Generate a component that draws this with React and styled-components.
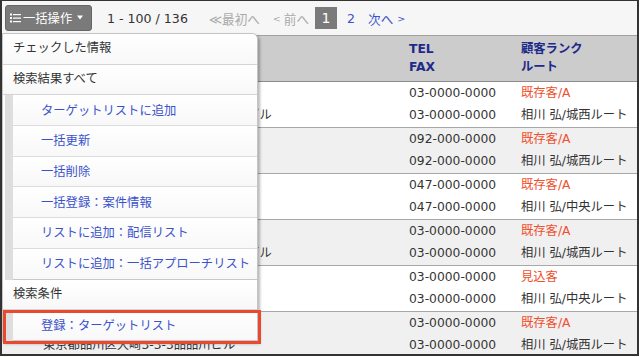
import React from 'react'
import styled, { createGlobalStyle } from 'styled-components'

const GlobalStyle = createGlobalStyle`
    html, body {
        margin: 0;
        padding: 0;
        background: #fff;
    }
    body {
        font-family: "DejaVu Sans", "Noto Sans CJK JP", sans-serif;
        font-size: 12.3px;
        color: #333;
    }
`

const Frame = styled.div`
    position: relative;
    width: 639px;
    height: 356px;
    box-sizing: border-box;
    border-style: solid;
    border-color: #333;
    border-width: 1px 2px 2px 2px;
    overflow: hidden;
    background: #fff;
`

const Toolbar = styled.div`
    height: 35px;
    box-sizing: border-box;
    display: flex;
    align-items: center;
    padding-left: 3px;
    background: #f6f6f6;
    border-bottom: 1px solid #a2a2a2;
`

const BulkButton = styled.div`
    width: 87px;
    height: 26px;
    box-sizing: border-box;
    display: flex;
    align-items: center;
    padding-left: 4px;
    background: #7a7a7a;
    border: 1px solid #666;
    border-radius: 3px;
    color: #fff;
    margin-top: -1px;
`

const ButtonLabel = styled.span`
    margin-left: 2px;
`

const Caret = styled.svg`
    margin-left: 5px;
`

const PagerText = styled.span`
    display: flex;
    align-items: center;
    margin-left: ${props => props.$ml}px;
    font-size: 12.6px;
    color: ${props => props.$color || '#333'};
    white-space: nowrap;
`

const Chevron = styled.span`
    font-size: 9.5px;
    margin: ${props => props.$right ? '0 0 0 4px' : '0 3px 0 0'};
`

const PageBox = styled.span`
    margin-left: ${props => props.$ml}px;
    width: 22px;
    height: 22px;
    display: flex;
    align-items: center;
    justify-content: center;
    background: #7a7a7a;
    color: #fff;
    font-size: 14px;
`

const HeaderRow = styled.div`
    height: 46px;
    box-sizing: border-box;
    display: grid;
    grid-template-columns: 366px 112px 1fr;
    align-items: center;
    padding-left: 41px;
    background: #cccccc;
    border-bottom: 1px solid #8c8c8c;
`

const HeaderCell = styled.div`
    font-weight: bold;
    color: #1c2a8a;
    line-height: 17.5px;
    font-size: 12.3px;
`

const Row = styled.div`
    height: 46px;
    box-sizing: border-box;
    display: grid;
    grid-template-columns: 366px 112px 1fr;
    padding-left: 41px;
    background: ${props => props.$alt ? '#f0f0f0' : '#fff'};
    border-bottom: 1px solid #a8a8a8;
`

const Cell = styled.div`
    line-height: 22px;
    white-space: nowrap;
`

const Line = styled.div`
    color: ${props => props.$accent ? '#f04f2c' : '#333'};
`

const Menu = styled.div`
    position: absolute;
    top: 32px;
    left: 0;
    width: 256px;
    box-sizing: border-box;
    background: #fff;
    border: 1px solid #c4c4c4;
    border-top-right-radius: 6px;
    box-shadow: 2px 2px 3px rgba(0, 0, 0, 0.28);
    z-index: 2;
`

const MenuHeading = styled.div`
    height: 30.7px;
    box-sizing: border-box;
    display: flex;
    align-items: center;
    padding: 0 0 3px 10px;
    color: #333;
    background: linear-gradient(#fff, #f8f8f8);
    border-bottom: 1px solid #d4d4d4;
    border-top-right-radius: ${props => props.$first ? '6px' : '0'};
`

const MenuLink = styled.div`
    height: 30.7px;
    box-sizing: border-box;
    margin-left: 2px;
    display: flex;
    border-left: 8px solid #dedede;
`

const MenuLinkInner = styled.div`
    flex: 1;
    display: flex;
    align-items: center;
    padding: 0 0 1px 28px;
    color: #3a52cc;
    background: linear-gradient(#fff, #f8f8f8);
    border-bottom: 1px solid ${props => props.$last ? '#c8c8c8' : '#dcdcdc'};
    white-space: nowrap;
`

const Highlight = styled.div`
    position: absolute;
    left: 1px;
    top: 309px;
    width: 258px;
    height: 34px;
    box-sizing: border-box;
    border: 3px solid #e9492e;
    z-index: 3;
    pointer-events: none;
`

const rows = [
    { name: '株式会社サンプル商事', addr: '東京都港区芝浦3-3-3品川シーサイドビル', tel: '03-0000-0000', fax: '03-0000-0000', rank: '既存客/A', route: '相川 弘/城西ルート' },
    { name: '九州サンプル株式会社', addr: '福岡県福岡市博多区1-1-1', tel: '092-000-0000', fax: '092-000-0000', rank: '既存客/A', route: '相川 弘/城西ルート' },
    { name: '千葉サンプル工業', addr: '千葉県市川市1-1-1', tel: '047-000-0000', fax: '047-000-0000', rank: '既存客/A', route: '相川 弘/中央ルート' },
    { name: '株式会社テスト物産', addr: '東京都港区芝浦3-3-3品川シーサイドビル', tel: '03-0000-0000', fax: '03-0000-0000', rank: '既存客/A', route: '相川 弘/城西ルート' },
    { name: 'テスト商会', addr: '東京都品川区大崎2-2-2', tel: '03-0000-0000', fax: '03-0000-0000', rank: '見込客', route: '相川 弘/中央ルート' },
    { name: '品川サンプル株式会社', addr: '東京都品川区大崎3-3-3品品川ビル', tel: '03-0000-0000', fax: '03-0000-0000', rank: '既存客/A', route: '相川 弘/城西ルート' },
]

const bulkLinks = [
    'ターゲットリストに追加',
    '一括更新',
    '一括削除',
    '一括登録：案件情報',
    'リストに追加：配信リスト',
    'リストに追加：一括アプローチリスト',
]

function ListIcon() {
    return (
        <svg width="11" height="10" viewBox="0 0 11 10">
            <rect x="0" y="0.5" width="2" height="2" fill="#fff" />
            <rect x="0" y="4" width="2" height="2" fill="#fff" />
            <rect x="0" y="7.5" width="2" height="2" fill="#fff" />
            <rect x="3" y="1" width="8" height="1.2" fill="#fff" />
            <rect x="3" y="4.5" width="8" height="1.2" fill="#fff" />
            <rect x="3" y="8" width="8" height="1.2" fill="#fff" />
        </svg>
    )
}

export default function App() {
    return (
        <>
            <GlobalStyle />
            <Frame>
                <Toolbar>
                    <BulkButton>
                        <ListIcon />
                        <ButtonLabel>一括操作</ButtonLabel>
                        <Caret width="6" height="5" viewBox="0 0 6 5">
                            <path d="M0 0.5 L6 0.5 L3 4.5 Z" fill="#fff" />
                        </Caret>
                    </BulkButton>
                    <PagerText $ml={15}>1 - 100 / 136</PagerText>
                    <PagerText $ml={21} $color="#aaa">≪最初へ</PagerText>
                    <PagerText $ml={13} $color="#aaa"><Chevron>&lt;</Chevron>前へ</PagerText>
                    <PageBox $ml={6}>1</PageBox>
                    <PagerText $ml={10} $color="#3a52cc">2</PagerText>
                    <PagerText $ml={13} $color="#3a52cc">次へ<Chevron $right>&gt;</Chevron></PagerText>
                </Toolbar>
                <HeaderRow>
                    <HeaderCell>会社名<br />住所</HeaderCell>
                    <HeaderCell>TEL<br />FAX</HeaderCell>
                    <HeaderCell>顧客ランク<br />ルート</HeaderCell>
                </HeaderRow>
                {rows.map((r, i) => (
                    <Row key={i} $alt={i % 2 === 1}>
                        <Cell>
                            <Line>{r.name}</Line>
                            <Line>{r.addr}</Line>
                        </Cell>
                        <Cell>
                            <Line>{r.tel}</Line>
                            <Line>{r.fax}</Line>
                        </Cell>
                        <Cell>
                            <Line $accent>{r.rank}</Line>
                            <Line>{r.route}</Line>
                        </Cell>
                    </Row>
                ))}
                <Menu>
                    <MenuHeading $first>チェックした情報</MenuHeading>
                    <MenuHeading>検索結果すべて</MenuHeading>
                    {bulkLinks.map((label, i) => (
                        <MenuLink key={label}>
                            <MenuLinkInner $last={i === bulkLinks.length - 1}>{label}</MenuLinkInner>
                        </MenuLink>
                    ))}
                    <MenuHeading>検索条件</MenuHeading>
                    <MenuLink>
                        <MenuLinkInner $last>登録：ターゲットリスト</MenuLinkInner>
                    </MenuLink>
                </Menu>
                <Highlight />
            </Frame>
        </>
    )
}
